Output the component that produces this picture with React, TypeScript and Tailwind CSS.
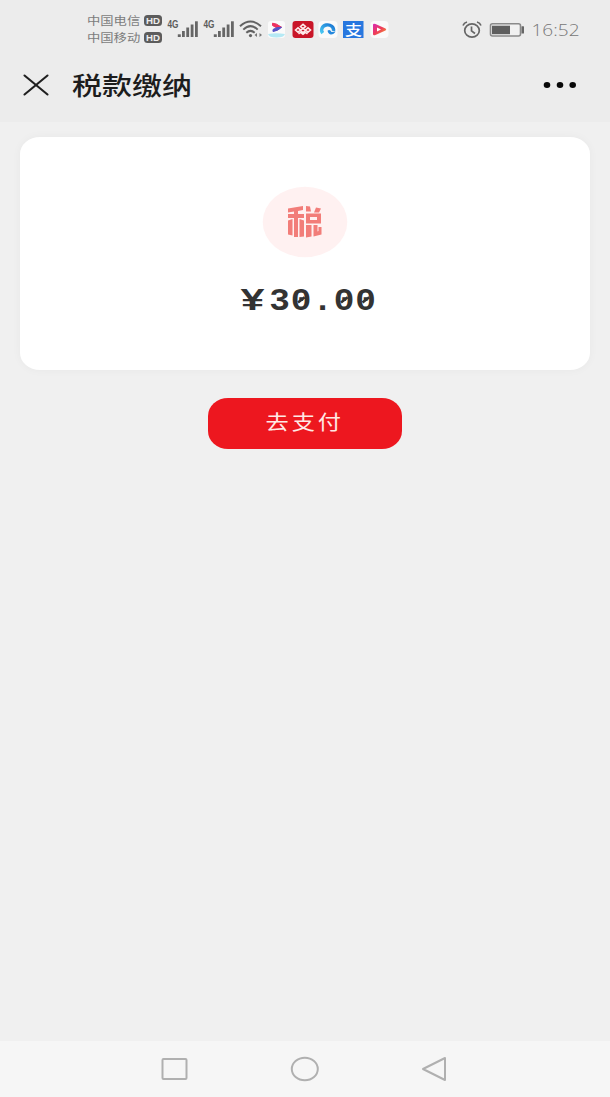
import React from "react";

const CJK = "font-['Noto_Sans_CJK_SC',sans-serif]";

function Txt({ x, y, size, width, weight = 400, fill, family, children }: {
  x: number; y: number; size: number; width: number; weight?: number; fill: string; family?: string; children: string;
}) {
  return (
    <text x={x} y={y} fontSize={size} fontWeight={weight} fill={fill} textLength={width} lengthAdjust="spacingAndGlyphs"
      fontFamily={family ?? "'Noto Sans CJK SC', sans-serif"}>{children}</text>
  );
}

function Carrier({ name }: { name: string }) {
  return (
    <div className="flex h-[17px] items-center gap-[3px]">
      <span className={`${CJK} w-[54px] shrink-0 whitespace-nowrap text-[11px] leading-[17px] text-[#7c7c7c]`}>
        <span className="inline-block origin-left scale-x-[1.21]">{name}</span>
      </span>
      <svg width="18" height="11" viewBox="0 0 18 11">
        <rect width="18" height="11" rx="3.5" fill="#5c5c5c" />
        <Txt x={2} y={9} size={9.5} width={14} weight={700} fill="#eee" family="'Liberation Sans', sans-serif">HD</Txt>
      </svg>
    </div>
  );
}

function Signal() {
  return (
    <svg width="32" height="20" viewBox="0 0 32 20">
      <Txt x={0.5} y={9} size={10} width={11} weight={700} fill="#5c5c5c" family="'Liberation Sans', sans-serif">4G</Txt>
      <g fill="#666">
        <rect x="10.8" y="15.3" width="3" height="2.7" />
        <rect x="15" y="12" width="2.8" height="6" />
        <rect x="19.3" y="8.5" width="2.8" height="9.5" />
        <rect x="23.7" y="5.5" width="2.8" height="12.5" />
        <rect x="28" y="2.3" width="2.8" height="15.7" />
      </g>
    </svg>
  );
}

function StatusBar() {
  return (
    <div className="flex h-[58px] items-start pl-[87px] pr-[29px]">
      <div className="w-[80px] pt-[12px]">
        <Carrier name="中国电信" />
        <Carrier name="中国移动" />
      </div>
      <div className="flex gap-[4px] pt-[19px]"><Signal /><Signal /></div>
      <svg className="ml-[4px] mt-[19px]" width="26" height="20" viewBox="0 0 26 20" fill="none" stroke="#626262" strokeWidth="2">
        <path d="M1 7.2Q11.5 -2.2 22 7.2M4.3 10.6Q11.5 3.7 18.7 10.6M7.3 13.8Q11.5 10 15.7 13.8" />
        <circle cx="11.5" cy="16.6" r="1.6" fill="#626262" stroke="none" />
        <path d="M15.5 16L18 14V18ZM23 16L20.5 14V18Z" fill="#777" stroke="none" />
      </svg>
      <svg className="mt-[19px]" width="126" height="21" viewBox="0 0 126 21">
        <defs>
          <linearGradient id="play" x1="0" y1="0" x2="1" y2="1">
            <stop stopColor="#d829b5" /><stop offset=".5" stopColor="#ee3d59" /><stop offset="1" stopColor="#f6a12b" />
          </linearGradient>
          <linearGradient id="ring" x1="0" y1="1" x2="1" y2="0">
            <stop stopColor="#49c9f3" /><stop offset="1" stopColor="#1975d2" />
          </linearGradient>
        </defs>
        <rect x="3" y="2" width="17" height="17" rx="3" fill="#fafafa" />
        <path d="M7.5 4.2Q11 4 16.5 8.3L11.5 8.7L7.5 6.5Z" fill="#ed315f" stroke="#ed315f" strokeLinejoin="round" />
        <path d="M11.5 8.7L16.5 8.3Q13 12 8 12.5V10.5Z" fill="#5552c6" stroke="#5552c6" strokeLinejoin="round" />
        <path d="M3 15Q11 13.5 20 15Q19 18.5 11.5 18.5T3 15" fill="#b5e9f4" />
        <rect x="27.5" y="2" width="21" height="17" rx="3" fill="#c91528" />
        <g fill="none" stroke="#ffebeb" strokeWidth="1.6">
          <path d="M35.5 7.5L38 5.3L40.5 7.5L38 9.7ZM30.5 11L33 8.8L35.5 11L33 13.2ZM35.5 11.5L38 9.5L40.5 11.5L38 13.5ZM40.5 11L43 8.8L45.5 11L43 13.2ZM33.5 14.8L35.5 13.4L38 15.2L40.5 13.4L42.5 14.8" />
        </g>
        <rect x="53.5" y="2" width="19" height="17" rx="4" fill="#fafafa" />
        <path d="M57.8 14.2A6 5.2 0 1 1 68.5 12" fill="none" stroke="url(#ring)" strokeWidth="3.4" />
        <path d="M62.5 11.7Q65 10 66.5 13L70.5 12.5Q69 15.5 66 15.5Q63.5 15.5 62.5 11.7Z" fill="#2588dd" />
        <rect x="78" y="2" width="20.5" height="17" fill="#2777df" />
        <Txt x={80} y={15.5} size={13.5} width={17} weight={500} fill="#fff">支</Txt>
        <rect x="105.5" y="2" width="18" height="17" rx="4" fill="#fafafa" />
        <path d="M108 6Q108 4 110.5 5L120.5 9.5Q122 10.5 120.5 11.5L110.5 16Q108 17 108 15Z" fill="url(#play)" />
        <path d="M112 8.5L116 10.5L112 12.5Z" fill="#fff" />
      </svg>
      <div className="ml-auto flex items-center gap-[7px] pt-[17px]">
        <svg width="20" height="19" viewBox="0 0 20 19" fill="none" stroke="#666" strokeWidth="1.7">
          <ellipse cx="10" cy="9.5" rx="7.3" ry="6.7" />
          <path d="M9.5 5.5V9.8L13 12.5M1 4.5Q2 1.8 5 1M15 1Q18 1.8 19 4.5" />
        </svg>
        <svg width="35" height="16" viewBox="0 0 35 16">
          <rect x="1.5" y="1.7" width="30" height="12.3" rx="2" fill="#f1f1f1" stroke="#8a8a8a" strokeWidth="1.6" />
          <rect x="3" y="3.7" width="18" height="8.5" fill="#5e5e5e" />
          <rect x="32.5" y="4.3" width="2.5" height="7.2" rx="0.5" fill="#666" />
        </svg>
        <svg width="50" height="26" viewBox="0 0 50 26">
          <Txt x={0.5} y={19.3} size={17} width={48} weight={300} fill="#777" family="'Open Sans', sans-serif">16:52</Txt>
        </svg>
      </div>
    </div>
  );
}

function TaxIcon() {
  return (
    <svg width="86" height="72" viewBox="0 0 86 72">
      <ellipse cx="43" cy="36" rx="42.3" ry="35.3" fill="#fff1f1" />
      <g fill="#f27d79">
        <path d="M26 22.5L41 20V24L36 25V28H42V32H36V51H32V32H26V28H32V25.5L26 26.5Z" />
        <path d="M26 34.5L30.5 33V49.5L26 48.5ZM37.5 33L42 34.5V50.5L37.5 51Z" />
        <path d="M44 20L48 20.5L49 25.5H44ZM54 21.5L59 22.5L57 26.5H52Z" />
        <path fillRule="evenodd" d="M44 27.5H59V37.5H44ZM48 31V34H55V31Z" />
        <path d="M44 39H49.5V50.5L44 51.5ZM51.5 39H55.5V45.5L56.5 45V41H59.5V48.5L51.5 50.5Z" />
      </g>
    </svg>
  );
}

export default function App() {
  return (
    <div className="flex h-[1097px] w-[610px] flex-col overflow-hidden bg-[#f0f0f0]">
      <header className="h-[122px] shrink-0 bg-[#ececec]">
        <StatusBar />
        <div className="flex h-[54px] items-center pl-[23px] pr-[33px]">
          <svg width="26" height="22" viewBox="0 0 26 22" fill="none" stroke="#202020" strokeWidth="2.1" strokeLinecap="round">
            <path d="M1.5 1.5L24.5 20.5M24.5 1.5L1.5 20.5" />
          </svg>
          <h1 className={`${CJK} mb-[2px] ml-[23px] origin-left scale-x-[1.2] whitespace-nowrap text-[25px] font-medium leading-[52px] text-[#1d1d1d]`}>税款缴纳</h1>
          <svg className="ml-auto" width="34" height="8" viewBox="0 0 34 8" fill="#080808">
            <ellipse cx="4" cy="4" rx="3.3" ry="2.9" /><ellipse cx="17" cy="4" rx="3.3" ry="2.9" /><ellipse cx="29.7" cy="4" rx="3.3" ry="2.9" />
          </svg>
        </div>
      </header>
      <main className="flex flex-1 flex-col items-center px-[20px] pt-[15px]">
        <section className="flex h-[233px] w-full flex-col items-center rounded-[20px/17px] bg-white pt-[49px] shadow-[0_0_10px_rgba(0,0,0,0.04)]">
          <TaxIcon />
          <svg className="ml-[6px] mt-[23px]" width="144" height="38" viewBox="-3 0 144 38">
            <Txt x={1} y={29} size={31} width={25} weight={700} fill="#333" family="'Liberation Mono', monospace">¥</Txt>
            <text transform="translate(30.2 29) scale(1.11 1)" fontSize="31" fontWeight="700" fill="#333" letterSpacing="0.76" fontFamily="'Liberation Mono', monospace">30.00</text>
            <path d="M59 21.5L65.7 16.2M102 21.5L108.7 16.2M123.5 21.5L130.2 16.2" stroke="#333" strokeWidth="2.6" />
          </svg>
        </section>
        <button className={`${CJK} mt-[28px] flex h-[51px] w-[194px] items-center justify-center rounded-[20px/18px] bg-[#ed171f] text-[20px] text-[#ffe9e5]`}>
          <span className="inline-block scale-x-[1.16] pb-[4px] tracking-[2.5px]">去支付</span>
        </button>
      </main>
      <nav className="flex h-[56px] shrink-0 items-center bg-[#f6f6f6] pl-[161px] pr-[163px]">
        <div className="flex w-full items-center justify-between">
          <svg width="27" height="24" viewBox="0 0 27 24" fill="none" stroke="#b0b0b0" strokeWidth="2"><rect x="1.5" y="2" width="24" height="20" rx="1" /></svg>
          <svg width="29" height="26" viewBox="0 0 29 26" fill="none" stroke="#b0b0b0" strokeWidth="2"><ellipse cx="14.8" cy="13" rx="13" ry="11.3" /></svg>
          <svg width="26" height="26" viewBox="0 0 26 26" fill="none" stroke="#b0b0b0" strokeWidth="2" strokeLinejoin="round"><path d="M2 13L24 2V24Z" /></svg>
        </div>
      </nav>
    </div>
  );
}
